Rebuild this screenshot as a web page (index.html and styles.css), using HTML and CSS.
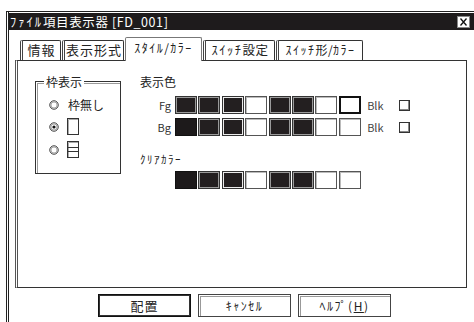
FILE: index.html
```html
<!DOCTYPE html>
<html lang="ja">
<head>
<meta charset="utf-8">
<link rel="stylesheet" href="styles.css">
</head>
<body>
<div class="window">
  <div class="titlebar">
    <span class="title"><span class="hw">ﾌｧｲﾙ</span>項目表示器 [FD_001]</span>
    <span class="close"><svg width="13" height="12" viewBox="0 0 13 12"><rect x="0.5" y="0.5" width="12" height="11" fill="#fff" stroke="#888"/><path d="M3.5 2.5 L9.5 9.5 M9.5 2.5 L3.5 9.5" stroke="#111" stroke-width="1.3"/></svg></span>
  </div>
  <div class="tabs">
    <div class="tab tab-info">情報</div>
    <div class="tab tab-fmt">表示形式</div>
    <div class="tab tab-style active">ｽﾀｲﾙ/ｶﾗｰ</div>
    <div class="tab tab-sw"><span class="hw">ｽｲｯﾁ</span>設定</div>
    <div class="tab tab-swc"><span class="hw">ｽｲｯﾁ</span>形/<span class="hw">ｶﾗｰ</span></div>
  </div>
  <div class="panel">
    <div class="group">
      <div class="legend">枠表示</div>
      <div class="opt opt-first">
        <svg class="radio" width="10" height="10" viewBox="0 0 10 10"><circle cx="5" cy="5" r="4.2" fill="#fff" stroke="#333"/><circle cx="5" cy="5" r="3" fill="none" stroke="#aaa"/></svg>
        <span class="opt-label">枠無し</span>
      </div>
      <div class="opt">
        <svg class="radio" width="10" height="10" viewBox="0 0 10 10"><circle cx="5" cy="5" r="4.2" fill="#fff" stroke="#333"/><circle cx="5" cy="5" r="3" fill="none" stroke="#aaa"/><circle cx="5" cy="5" r="1.6" fill="#111"/></svg>
        <svg class="frame" width="12" height="17" viewBox="0 0 12 17"><rect x="0.5" y="0.5" width="11" height="16" fill="#fff" stroke="#333"/><path d="M1.5 16 V1.5 H11" fill="none" stroke="#aaa"/></svg>
      </div>
      <div class="opt">
        <svg class="radio" width="10" height="10" viewBox="0 0 10 10"><circle cx="5" cy="5" r="4.2" fill="#fff" stroke="#333"/><circle cx="5" cy="5" r="3" fill="none" stroke="#aaa"/></svg>
        <svg class="frame" width="12" height="17" viewBox="0 0 12 17"><rect x="0.5" y="0.5" width="11" height="16" fill="#fff" stroke="#333"/><path d="M1.5 16 V1.5 H11" fill="none" stroke="#aaa"/><path d="M1 6.5 H11 M1 10.5 H11" stroke="#333"/></svg>
      </div>
    </div>
    <div class="colors">
      <div class="caption">表示色</div>
      <div class="swrow swrow-fg">
        <span class="swlabel">Fg</span>
        <div class="sw"></div><div class="sw"></div><div class="sw lt"></div><div class="sw wh"></div><div class="sw"></div><div class="sw"></div><div class="sw wh"></div><div class="sw wh sel-w"></div>
        <span class="blk">Blk</span>
        <span class="minibox"></span>
      </div>
      <div class="swrow swrow-bg">
        <span class="swlabel">Bg</span>
        <div class="sw sel-k"></div><div class="sw"></div><div class="sw lt"></div><div class="sw wh"></div><div class="sw"></div><div class="sw"></div><div class="sw wh"></div><div class="sw wh"></div>
        <span class="blk">Blk</span>
        <span class="minibox"></span>
      </div>
      <div class="subcap">ｸﾘｱｶﾗｰ</div>
      <div class="swrow swrow-clear">
        <div class="sw sel-k"></div><div class="sw"></div><div class="sw lt"></div><div class="sw wh"></div><div class="sw"></div><div class="sw"></div><div class="sw wh"></div><div class="sw wh"></div>
      </div>
    </div>
  </div>
  <div class="buttons">
    <div class="btn default">配置</div>
    <div class="btn hw">ｷｬﾝｾﾙ</div>
    <div class="btn hw">ﾍﾙﾌﾟ(<u>H</u>)</div>
  </div>
</div>
</body>
</html>
```

FILE: styles.css
```css
* { box-sizing: border-box; }

body {
  margin: 0;
  width: 474px;
  height: 322px;
  overflow: hidden;
  background: #fff;
  color: #222;
  font-family: "Noto Sans CJK JP", "Noto Sans", sans-serif;
}

.hw { letter-spacing: 1.5px; }

.window {
  margin: 11px 0 0 6px;
  height: 311px;
  border-top: 1px solid #222;
  border-left: 3px double #222;
}

.titlebar {
  margin-top: 1px;
  height: 17px;
  background: #1e1b1c;
  color: #fff;
  display: flex;
  align-items: center;
  justify-content: space-between;
  padding: 0 4px 0 1px;
  font-size: 12.5px;
  line-height: 17px;
}

.title { white-space: nowrap; letter-spacing: 0.6px; }
.title .hw { letter-spacing: 2px; }

.close { display: flex; }

.tabs {
  display: flex;
  align-items: flex-end;
  gap: 1px;
  height: 23px;
  margin: 7px 0 0 11px;
  position: relative;
  z-index: 1;
}

.tab {
  height: 20px;
  border: 1px solid #333;
  border-left: 3px double #444;
  border-bottom: none;
  border-radius: 2px 2px 0 0;
  background: #fff;
  font-size: 13px;
  line-height: 18px;
  text-align: center;
  white-space: nowrap;
  letter-spacing: 1px;
}

.tab.active {
  height: 24px;
  margin-bottom: -1px;
  line-height: 20px;
  letter-spacing: 1.5px;
  font-size: 12px;
  border-color: #777;
  border-left: 1px solid #777;
}

.tab-info { width: 41px; }
.tab-fmt { width: 62px; }
.tab-style { width: 77px; }
.tab-sw { width: 72px; font-size: 12.5px; letter-spacing: 0.5px; }
.tab-swc { width: 87px; font-size: 12px; letter-spacing: 0.5px; }

.panel {
  margin-left: 6px;
  width: 452px;
  height: 228px;
  border: 1px solid #333;
  border-left: 3px double #555;
  display: flex;
  align-items: flex-start;
}

.group {
  margin: 20px 0 0 17px;
  width: 86px;
  height: 93px;
  border: 1px solid #333;
  box-shadow: inset 1px 1px 0 #fff, inset 2px 2px 0 #999;
}

.legend {
  display: block;
  width: max-content;
  margin: -7px 0 0 8px;
  padding: 0 2px;
  background: #fff;
  font-size: 12px;
  line-height: 13px;
}

.opt {
  display: flex;
  align-items: center;
  gap: 8px;
  padding-left: 13px;
  height: 17px;
  margin-top: 6px;
}

.opt-first {
  height: 14px;
  margin-top: 10px;
  gap: 9px;
}

.opt-label {
  font-size: 12px;
  line-height: 14px;
}

.radio, .frame { flex: none; display: block; }

.colors {
  margin-left: 19px;
  padding-top: 15px;
}

.caption {
  font-size: 12px;
  line-height: 12px;
}

.swrow {
  display: flex;
  align-items: center;
  gap: 1.4px;
  height: 18px;
}

.swrow-fg { margin-top: 8px; }
.swrow-bg { margin-top: 4px; }
.swrow-clear { margin-top: 5px; padding-left: 35px; }

.swlabel {
  width: 35px;
  margin-right: -1.4px;
  padding-right: 4px;
  text-align: right;
  font-size: 11px;
  color: #333;
}

.sw {
  width: 22px;
  height: 18px;
  flex: none;
  border: 1px solid #333;
  background: #231f20;
  box-shadow: inset 0 0 0 1px #9a9a9a;
}

.sw.lt { box-shadow: inset 0 0 0 1px #ececec; }

.sw.wh {
  background: #fff;
  border-color: #555;
  box-shadow: inset 1px 1px 0 #bbb;
}

.sw.sel-w {
  border: 2px solid #111;
  box-shadow: none;
}

.sw.sel-k {
  border-color: #111;
  box-shadow: none;
  background: #1d1a1b;
}

.blk {
  margin-left: 5px;
  font-size: 11px;
  color: #444;
  width: 26px;
}

.minibox {
  margin-left: 4px;
  width: 11px;
  height: 11px;
  border: 1px solid #333;
  box-shadow: inset -1px -1px 0 #888, inset 1px 1px 0 #fff;
}

.subcap {
  margin-top: 17px;
  font-size: 11px;
  line-height: 13px;
  letter-spacing: 1.5px;
}

.buttons {
  display: flex;
  gap: 7px;
  margin: 6px 0 0 89px;
}

.btn {
  width: 93px;
  height: 23px;
  border: 1px solid #444;
  box-shadow: inset 1px 1px 0 #fff, inset 2px 2px 0 #999;
  font-size: 12px;
  line-height: 21px;
  text-align: center;
  color: #222;
}

.btn.default {
  border: 1px solid #111;
  box-shadow: inset 0 0 0 1px #333;
  font-size: 13px;
  letter-spacing: 1px;
}
```
